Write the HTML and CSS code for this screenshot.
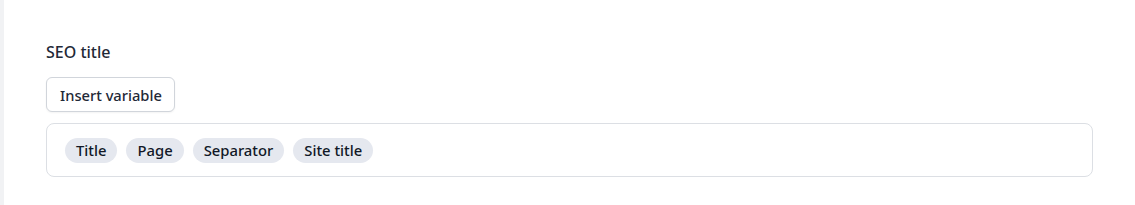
FILE: index.html
```html
<!DOCTYPE html>
<html>
<head>
<meta charset="utf-8">
<link rel="stylesheet" href="styles.css">
</head>
<body>
<div class="panel">
  <div class="field">
    <label class="label">SEO title</label>
    <div class="toolbar">
      <button class="btn" type="button">Insert variable</button>
    </div>
    <div class="editor">
      <span class="chip">Title</span>
      <span class="chip">Page</span>
      <span class="chip">Separator</span>
      <span class="chip">Site title</span>
    </div>
  </div>
</div>
</body>
</html>
```
FILE: styles.css
```css
html, body {
  margin: 0;
  padding: 0;
  background: #ffffff;
}
body {
  font-family: "Noto Sans", "Open Sans", sans-serif;
  color: #1f2937;
}
.panel {
  border-left: 4px solid #f1f2f4;
  height: 205px;
  box-sizing: border-box;
  padding: 41px 42px 0 42px;
}
.field {
  display: flex;
  flex-direction: column;
}
.label {
  font-size: 16px;
  font-weight: 500;
  line-height: 22px;
  color: #1f2937;
}
.toolbar {
  margin-top: 14px;
  display: flex;
}
.btn {
  font-family: inherit;
  font-size: 14.7px;
  font-weight: 500;
  color: #1f2937;
  background: #ffffff;
  border: 1px solid #d1d5db;
  border-radius: 6px;
  height: 35px;
  padding: 0 12px 0 13px;
  line-height: 20px;
  box-shadow: 0 1px 2px rgba(0,0,0,0.05);
}
.editor {
  margin-top: 11px;
  border: 1px solid #dcdfe4;
  border-radius: 8px;
  height: 54px;
  box-sizing: border-box;
  padding: 0 18px;
  display: flex;
  align-items: center;
  gap: 9px;
}
.chip {
  background: #e5e8ef;
  border-radius: 13px;
  height: 25px;
  line-height: 25px;
  padding: 0 11px;
  font-size: 14.8px;
  font-weight: 500;
  color: #111827;
}
```
